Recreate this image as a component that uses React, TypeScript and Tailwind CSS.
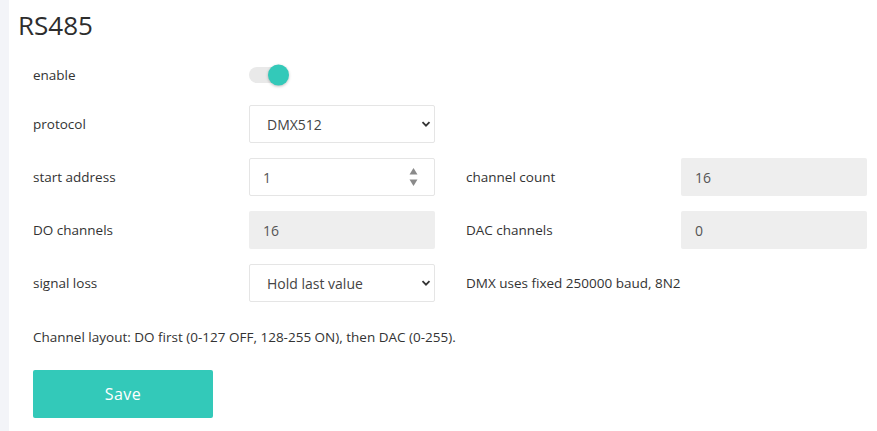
import React, { useState } from 'react';

const font = { fontFamily: '"Open Sans", "Noto Sans", sans-serif' };

function Chevron() {
  return (
    <svg
      className="pointer-events-none absolute right-[4px] top-1/2 -translate-y-1/2"
      width="10"
      height="10"
      viewBox="0 0 10 10"
    >
      <path d="M1.5 3.2 L5 6.7 L8.5 3.2" fill="none" stroke="#333" strokeWidth="1.8" />
    </svg>
  );
}

function Spinner() {
  return (
    <svg
      className="pointer-events-none absolute right-[17px] top-1/2 -translate-y-1/2"
      width="9"
      height="19"
      viewBox="0 0 9 19"
    >
      <path d="M4.5 0.5 L8.5 7 L0.5 7 Z" fill="#8a8a8a" />
      <path d="M0.5 12 L8.5 12 L4.5 18.5 Z" fill="#8a8a8a" />
    </svg>
  );
}

function Select({ value, options }: { value: string; options: string[] }) {
  return (
    <div className="relative h-[38px]">
      <select
        defaultValue={value}
        className="h-full w-full appearance-none rounded-[2px] border border-[#e5e5e5] bg-white pl-[17px] text-[14px] text-[#444] outline-none"
      >
        {options.map((o) => (
          <option key={o}>{o}</option>
        ))}
      </select>
      <Chevron />
    </div>
  );
}

function ReadOnly({ value }: { value: string }) {
  return (
    <div className="flex h-[38px] items-center rounded-[2px] bg-[#eeeeee] pl-[14px] text-[14px] text-[#555]">
      {value}
    </div>
  );
}

function Label({ children }: { children: React.ReactNode }) {
  return <div className="flex h-[38px] items-center text-[13.5px] text-[#333]">{children}</div>;
}

export default function App() {
  const [enabled, setEnabled] = useState(true);

  return (
    <div className="flex min-h-screen bg-white" style={font}>
      <div className="w-[9px] shrink-0 bg-[#f3f4f8]" />
      <div className="flex-1 pl-[9px] pr-[10px] pt-[8px]">
        <h1 className="text-[26px] leading-[34px] text-[#2d2d2d]">RS485</h1>

        <div className="mt-[18px] grid grid-cols-[216px_186px_31px_215px_186px] gap-y-[15px] pl-[15px]">
          {/* enable */}
          <div className="flex h-[30px] items-center text-[13.5px] text-[#333]">enable</div>
          <div className="flex h-[30px] items-center">
            <button
              onClick={() => setEnabled(!enabled)}
              className="relative h-[16px] w-[38px] rounded-full bg-[#e9e9e9]"
            >
              <span
                className={
                  enabled
                    ? 'absolute right-[-2px] top-1/2 h-[21px] w-[21px] -translate-y-1/2 rounded-full bg-[#33c9b9] shadow-[0_1px_3px_rgba(0,0,0,0.25)]'
                    : 'absolute left-[-2px] top-1/2 h-[21px] w-[21px] -translate-y-1/2 rounded-full bg-white shadow-[0_1px_3px_rgba(0,0,0,0.25)]'
                }
              />
            </button>
          </div>
          <div className="col-span-3" />

          {/* protocol */}
          <Label>protocol</Label>
          <Select value="DMX512" options={['DMX512', 'Modbus RTU']} />
          <div className="col-span-3" />

          {/* start address / channel count */}
          <Label>start address</Label>
          <div className="relative h-[38px]">
            <input
              type="text"
              defaultValue="1"
              className="h-full w-full rounded-[2px] border border-[#e5e5e5] bg-white pl-[13px] text-[14px] text-[#555] outline-none"
            />
            <Spinner />
          </div>
          <div />
          <Label>channel count</Label>
          <ReadOnly value="16" />

          {/* DO / DAC channels */}
          <Label>DO channels</Label>
          <ReadOnly value="16" />
          <div />
          <Label>DAC channels</Label>
          <ReadOnly value="0" />

          {/* signal loss */}
          <Label>signal loss</Label>
          <Select value="Hold last value" options={['Hold last value', 'Set to zero']} />
          <div />
          <div className="col-span-2 flex h-[38px] items-center text-[13.5px] text-[#333]">
            DMX uses fixed 250000 baud, 8N2
          </div>
        </div>

        <p className="mt-[25px] pl-[15px] text-[13.5px] leading-[20px] text-[#333]">
          Channel layout: DO first (0-127 OFF, 128-255 ON), then DAC (0-255).
        </p>

        <div className="pl-[15px] pt-[23px]">
          <button className="h-[48px] w-[180px] rounded-[2px] bg-[#33c9b9] text-[16px] tracking-[0.5px] text-white">
            Save
          </button>
        </div>
      </div>
    </div>
  );
}
